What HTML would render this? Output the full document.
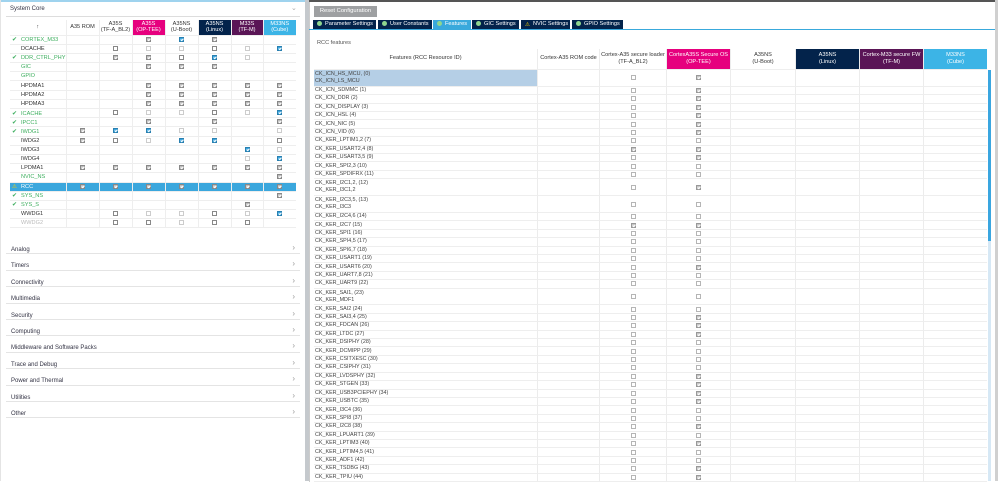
<!DOCTYPE html>
<html><head><meta charset="utf-8"><style>
*{box-sizing:border-box;margin:0;padding:0}
body{width:998px;height:481px;overflow:hidden;background:#fff;font-family:"Liberation Sans",sans-serif;position:relative;color:#333}
.abs{position:absolute}
table{border-collapse:collapse;table-layout:fixed;font-size:5.6px}
td{padding:0;text-align:center;vertical-align:middle;white-space:nowrap;overflow:hidden}
.lt td{height:9.2px;border-bottom:1px solid #eee;border-left:1px solid #eee}
.lt td.n{text-align:left;padding-left:2px;border-left:none}
.lt thead td{height:15px;line-height:6.5px;color:#333}
.gr{color:#3dae5e}
.ck{color:#3dae5e;display:inline-block;width:9px;font-size:6px}
.sp{display:inline-block;width:9px}
i{display:inline-block;width:5px;height:5px;border:1px solid #888;vertical-align:middle;position:relative}
i.g{background:#bcbcbc;border-color:#888}
i.b{background:#3aa6e0;border-color:#2a80b0}
i.l{border-color:#ccc}
i.g:after,i.b:after{content:"";position:absolute;left:1px;top:0px;width:1.2px;height:2.2px;border:solid #fff;border-width:0 1px 1px 0;transform:rotate(45deg)}
.sel td{background:#3ba7dd;color:#fff}
.cat{position:absolute;left:6px;width:294px;height:16.4px;border-bottom:1.5px solid #e4e4e4;font-size:6px;color:#334;padding-left:5px;padding-top:7px;line-height:10px}
.cat:after{content:"›";position:absolute;right:5px;top:5px;color:#999;font-size:8px;line-height:10px}
.rt{display:block;width:673px}
.rt thead,.rt tbody{display:block}
.rt tr{display:flex;height:8.42px;overflow:hidden}
.rt tr.d{height:16.84px}
.rt thead tr{height:21px}
.rt td{display:flex;align-items:center;justify-content:center;flex:none;height:100%;border-bottom:1px solid #eeeeee;border-left:1px solid #ececec;line-height:7px}
.rt td:nth-child(1){width:223px}.rt td:nth-child(2){width:62px}.rt td:nth-child(3){width:67px}.rt td:nth-child(4){width:64px}.rt td:nth-child(5){width:65px}.rt td:nth-child(6){width:64px}.rt td:nth-child(7){width:64px}.rt td:nth-child(8){width:64px}
.rt td.n{justify-content:flex-start;text-align:left;padding-left:1px;border-left:none;color:#444;font-size:5.4px}
.rt thead td{font-size:5.6px;line-height:7.5px;color:#333;white-space:normal;text-align:center}
.rt i{width:5px;height:5px;border-color:#b5b5b5}
.rt i.g{background:#c6c6c6;border-color:#999}
.tab{position:absolute;top:20px;height:9px;background:#03234b;color:#fff;font-size:5.6px;line-height:9px;padding-left:4px}
.tab b{display:inline-block;width:5px;height:5px;border-radius:50%;background:#8fd68f;margin-right:3px;vertical-align:-0.5px}
</style></head><body>
<!-- left panel -->
<div class="abs" style="left:0;top:0;width:305px;height:1.5px;background:#9fd3ee"></div>
<div class="abs" style="left:305px;top:0;width:4px;height:481px;background:#c5c9cd"></div>
<div class="abs" style="left:10px;top:6px;font-size:6px;color:#334">System Core</div>
<div class="abs" style="left:291px;top:4px;font-size:7px;color:#aaa">⌄</div>
<div class="abs" style="left:6px;top:15.5px;width:294px;height:1px;background:#ddd"></div>
<table class="lt abs" style="left:10px;top:20px;width:286px">
<colgroup><col style="width:56px"><col style="width:33px"><col style="width:33px"><col style="width:33px"><col style="width:33px"><col style="width:33px"><col style="width:32px"><col style="width:33px"></colgroup>
<thead><tr><td style="border-left:none">↑</td><td>A35 ROM</td><td>A35S<br>(TF-A_BL2)</td><td style="background:#e6007e;color:#fff">A35S<br>(OP-TEE)</td><td>A35NS<br>(U-Boot)</td><td style="background:#03234b;color:#fff">A35NS<br>(Linux)</td><td style="background:#5a1556;color:#fff">M33S<br>(TF-M)</td><td style="background:#3cb4e6;color:#fff">M33NS<br>(Cube)</td></tr></thead>
<tbody>
<tr><td class="n gr"><span class="ck">✔</span>CORTEX_M33</td><td></td><td></td><td><i class="g"></i></td><td><i class="b"></i></td><td><i class="g"></i></td><td></td><td></td></tr>
<tr><td class="n"><span class="sp"></span>DCACHE</td><td></td><td><i></i></td><td><i class="l"></i></td><td><i class="l"></i></td><td><i></i></td><td><i class="l"></i></td><td><i class="b"></i></td></tr>
<tr><td class="n gr"><span class="ck">✔</span>DDR_CTRL_PHY</td><td></td><td><i class="g"></i></td><td><i class="g"></i></td><td><i></i></td><td><i class="b"></i></td><td><i class="l"></i></td><td></td></tr>
<tr><td class="n gr"><span class="sp"></span>GIC</td><td></td><td></td><td><i class="g"></i></td><td><i class="g"></i></td><td><i class="g"></i></td><td></td><td></td></tr>
<tr><td class="n gr"><span class="sp"></span>GPIO</td><td></td><td></td><td></td><td></td><td></td><td></td><td></td></tr>
<tr><td class="n"><span class="sp"></span>HPDMA1</td><td></td><td></td><td><i class="g"></i></td><td><i class="g"></i></td><td><i class="g"></i></td><td><i class="g"></i></td><td><i class="g"></i></td></tr>
<tr><td class="n"><span class="sp"></span>HPDMA2</td><td></td><td></td><td><i class="g"></i></td><td><i class="g"></i></td><td><i class="g"></i></td><td><i class="g"></i></td><td><i class="g"></i></td></tr>
<tr><td class="n"><span class="sp"></span>HPDMA3</td><td></td><td></td><td><i class="g"></i></td><td><i class="g"></i></td><td><i class="g"></i></td><td><i class="g"></i></td><td><i class="g"></i></td></tr>
<tr><td class="n gr"><span class="ck">✔</span>ICACHE</td><td></td><td><i></i></td><td><i class="l"></i></td><td><i class="l"></i></td><td><i></i></td><td><i class="l"></i></td><td><i class="b"></i></td></tr>
<tr><td class="n gr"><span class="ck">✔</span>IPCC1</td><td></td><td></td><td><i class="g"></i></td><td></td><td><i class="g"></i></td><td></td><td><i class="g"></i></td></tr>
<tr><td class="n gr"><span class="ck">✔</span>IWDG1</td><td><i class="g"></i></td><td><i class="b"></i></td><td><i class="b"></i></td><td><i class="l"></i></td><td><i class="l"></i></td><td></td><td><i class="l"></i></td></tr>
<tr><td class="n"><span class="sp"></span>IWDG2</td><td><i class="g"></i></td><td><i></i></td><td><i class="l"></i></td><td><i class="b"></i></td><td><i class="b"></i></td><td></td><td><i></i></td></tr>
<tr><td class="n"><span class="sp"></span>IWDG3</td><td></td><td></td><td></td><td></td><td></td><td><i class="b"></i></td><td><i class="l"></i></td></tr>
<tr><td class="n"><span class="sp"></span>IWDG4</td><td></td><td></td><td></td><td></td><td></td><td><i class="l"></i></td><td><i class="b"></i></td></tr>
<tr><td class="n"><span class="sp"></span>LPDMA1</td><td><i class="g"></i></td><td><i class="g"></i></td><td><i class="g"></i></td><td><i class="g"></i></td><td><i class="g"></i></td><td><i class="g"></i></td><td><i class="g"></i></td></tr>
<tr><td class="n gr"><span class="sp"></span>NVIC_NS</td><td></td><td></td><td></td><td></td><td></td><td></td><td><i class="g"></i></td></tr>
<tr class="sel"><td class="n"><span class="sp" style="color:#f5d000">⚠</span>RCC</td><td><i class="g"></i></td><td><i class="g"></i></td><td><i class="g"></i></td><td><i class="g"></i></td><td><i class="g"></i></td><td><i class="g"></i></td><td><i class="g"></i></td></tr>
<tr><td class="n gr"><span class="ck">✔</span>SYS_NS</td><td></td><td></td><td></td><td></td><td></td><td></td><td><i class="g"></i></td></tr>
<tr><td class="n gr"><span class="ck">✔</span>SYS_S</td><td></td><td></td><td></td><td></td><td></td><td><i class="g"></i></td><td></td></tr>
<tr><td class="n"><span class="sp"></span>WWDG1</td><td></td><td><i></i></td><td><i class="l"></i></td><td><i class="l"></i></td><td><i></i></td><td><i class="l"></i></td><td><i class="b"></i></td></tr>
<tr><td class="n" style="color:#bbb"><span class="sp"></span>WWDG2</td><td></td><td><i></i></td><td><i></i></td><td><i class="l"></i></td><td><i></i></td><td><i></i></td><td></td></tr>
</tbody></table>
<div class="cat" style="top:238px">Analog</div>
<div class="cat" style="top:254.4px">Timers</div>
<div class="cat" style="top:270.8px">Connectivity</div>
<div class="cat" style="top:287.2px">Multimedia</div>
<div class="cat" style="top:303.6px">Security</div>
<div class="cat" style="top:320px">Computing</div>
<div class="cat" style="top:336.4px">Middleware and Software Packs</div>
<div class="cat" style="top:352.8px">Trace and Debug</div>
<div class="cat" style="top:369.2px">Power and Thermal</div>
<div class="cat" style="top:385.6px">Utilities</div>
<div class="cat" style="top:402px">Other</div>
<div class="abs" style="left:0;top:0;width:1px;height:481px;background:#e4e4e4"></div>

<!-- right panel -->
<div class="abs" style="left:309px;top:0;width:689px;height:1.5px;background:#555"></div>
<div class="abs" style="left:309px;top:1.5px;width:1px;height:480px;background:#ccc"></div>
<div class="abs" style="left:314px;top:6px;width:63px;height:11px;background:#9ea0a2;color:#fff;font-size:5.8px;line-height:11px;text-align:center">Reset Configuration</div>
<div class="tab" style="left:313px;width:63px"><b></b>Parameter Settings</div>
<div class="tab" style="left:378px;width:54px"><b></b>User Constants</div>
<div class="tab" style="left:433px;width:38px;background:#39a9dc"><b></b>Features</div>
<div class="tab" style="left:472px;width:47px"><b></b>GIC Settings</div>
<div class="tab" style="left:521px;width:49px"><b style="background:none;border-radius:0;width:auto;color:#f5d000;font-weight:normal">⚠</b>NVIC Settings</div>
<div class="tab" style="left:572px;width:51px"><b></b>GPIO Settings</div>
<div class="abs" style="left:309px;top:29px;width:689px;height:1px;background:#39a9dc"></div>
<div class="abs" style="left:317px;top:40px;font-size:5.6px;color:#555">RCC features</div>
<table class="rt abs" style="left:314px;top:49px">
<thead><tr><td style="border-left:none">Features (RCC Resource ID)</td><td>Cortex-A35 ROM code</td><td>Cortex-A35 secure loader<br>(TF-A_BL2)</td><td style="background:#e6007e;color:#fff">CortexA35S Secure OS<br>(OP-TEE)</td><td>A35NS<br>(U-Boot)</td><td style="background:#03234b;color:#fff">A35NS<br>(Linux)</td><td style="background:#5a1556;color:#fff">Cortex-M33 secure FW<br>(TF-M)</td><td style="background:#3cb4e6;color:#fff">M33NS<br>(Cube)</td></tr></thead>
<tbody>
<tr class="d"><td class="n" style="background:#b5cfe6">CK_ICN_HS_MCU, (0)<br>CK_ICN_LS_MCU</td><td></td><td><i></i></td><td><i class="g"></i></td><td></td><td></td><td></td><td></td></tr>
<tr><td class="n">CK_ICN_SDMMC (1)</td><td></td><td><i></i></td><td><i class="g"></i></td><td></td><td></td><td></td><td></td></tr>
<tr><td class="n">CK_ICN_DDR (2)</td><td></td><td><i></i></td><td><i class="g"></i></td><td></td><td></td><td></td><td></td></tr>
<tr><td class="n">CK_ICN_DISPLAY (3)</td><td></td><td><i></i></td><td><i class="g"></i></td><td></td><td></td><td></td><td></td></tr>
<tr><td class="n">CK_ICN_HSL (4)</td><td></td><td><i></i></td><td><i class="g"></i></td><td></td><td></td><td></td><td></td></tr>
<tr><td class="n">CK_ICN_NIC (5)</td><td></td><td><i></i></td><td><i class="g"></i></td><td></td><td></td><td></td><td></td></tr>
<tr><td class="n">CK_ICN_VID (6)</td><td></td><td><i></i></td><td><i class="g"></i></td><td></td><td></td><td></td><td></td></tr>
<tr><td class="n">CK_KER_LPTIM1,2 (7)</td><td></td><td><i></i></td><td><i></i></td><td></td><td></td><td></td><td></td></tr>
<tr><td class="n">CK_KER_USART2,4 (8)</td><td></td><td><i class="g"></i></td><td><i class="g"></i></td><td></td><td></td><td></td><td></td></tr>
<tr><td class="n">CK_KER_USART3,5 (9)</td><td></td><td><i></i></td><td><i class="g"></i></td><td></td><td></td><td></td><td></td></tr>
<tr><td class="n">CK_KER_SPI2,3 (10)</td><td></td><td><i></i></td><td><i></i></td><td></td><td></td><td></td><td></td></tr>
<tr><td class="n">CK_KER_SPDIFRX (11)</td><td></td><td><i></i></td><td><i></i></td><td></td><td></td><td></td><td></td></tr>
<tr class="d"><td class="n">CK_KER_I2C1,2, (12)<br>CK_KER_I3C1,2</td><td></td><td><i></i></td><td><i class="g"></i></td><td></td><td></td><td></td><td></td></tr>
<tr class="d"><td class="n">CK_KER_I2C3,5, (13)<br>CK_KER_I3C3</td><td></td><td><i></i></td><td><i></i></td><td></td><td></td><td></td><td></td></tr>
<tr><td class="n">CK_KER_I2C4,6 (14)</td><td></td><td><i></i></td><td><i></i></td><td></td><td></td><td></td><td></td></tr>
<tr><td class="n">CK_KER_I2C7 (15)</td><td></td><td><i class="g"></i></td><td><i class="g"></i></td><td></td><td></td><td></td><td></td></tr>
<tr><td class="n">CK_KER_SPI1 (16)</td><td></td><td><i></i></td><td><i></i></td><td></td><td></td><td></td><td></td></tr>
<tr><td class="n">CK_KER_SPI4,5 (17)</td><td></td><td><i></i></td><td><i></i></td><td></td><td></td><td></td><td></td></tr>
<tr><td class="n">CK_KER_SPI6,7 (18)</td><td></td><td><i></i></td><td><i></i></td><td></td><td></td><td></td><td></td></tr>
<tr><td class="n">CK_KER_USART1 (19)</td><td></td><td><i></i></td><td><i></i></td><td></td><td></td><td></td><td></td></tr>
<tr><td class="n">CK_KER_USART6 (20)</td><td></td><td><i></i></td><td><i class="g"></i></td><td></td><td></td><td></td><td></td></tr>
<tr><td class="n">CK_KER_UART7,8 (21)</td><td></td><td><i></i></td><td><i></i></td><td></td><td></td><td></td><td></td></tr>
<tr><td class="n">CK_KER_UART9 (22)</td><td></td><td><i></i></td><td><i></i></td><td></td><td></td><td></td><td></td></tr>
<tr class="d"><td class="n">CK_KER_SAI1, (23)<br>CK_KER_MDF1</td><td></td><td><i></i></td><td><i></i></td><td></td><td></td><td></td><td></td></tr>
<tr><td class="n">CK_KER_SAI2 (24)</td><td></td><td><i></i></td><td><i></i></td><td></td><td></td><td></td><td></td></tr>
<tr><td class="n">CK_KER_SAI3,4 (25)</td><td></td><td><i></i></td><td><i class="g"></i></td><td></td><td></td><td></td><td></td></tr>
<tr><td class="n">CK_KER_FDCAN (26)</td><td></td><td><i></i></td><td><i class="g"></i></td><td></td><td></td><td></td><td></td></tr>
<tr><td class="n">CK_KER_LTDC (27)</td><td></td><td><i></i></td><td><i class="g"></i></td><td></td><td></td><td></td><td></td></tr>
<tr><td class="n">CK_KER_DSIPHY (28)</td><td></td><td><i></i></td><td><i></i></td><td></td><td></td><td></td><td></td></tr>
<tr><td class="n">CK_KER_DCMIPP (29)</td><td></td><td><i></i></td><td><i></i></td><td></td><td></td><td></td><td></td></tr>
<tr><td class="n">CK_KER_CSITXESC (30)</td><td></td><td><i></i></td><td><i></i></td><td></td><td></td><td></td><td></td></tr>
<tr><td class="n">CK_KER_CSIPHY (31)</td><td></td><td><i></i></td><td><i></i></td><td></td><td></td><td></td><td></td></tr>
<tr><td class="n">CK_KER_LVDSPHY (32)</td><td></td><td><i></i></td><td><i class="g"></i></td><td></td><td></td><td></td><td></td></tr>
<tr><td class="n">CK_KER_STGEN (33)</td><td></td><td><i></i></td><td><i class="g"></i></td><td></td><td></td><td></td><td></td></tr>
<tr><td class="n">CK_KER_USB3PCIEPHY (34)</td><td></td><td><i></i></td><td><i class="g"></i></td><td></td><td></td><td></td><td></td></tr>
<tr><td class="n">CK_KER_USBTC (35)</td><td></td><td><i></i></td><td><i class="g"></i></td><td></td><td></td><td></td><td></td></tr>
<tr><td class="n">CK_KER_I3C4 (36)</td><td></td><td><i></i></td><td><i></i></td><td></td><td></td><td></td><td></td></tr>
<tr><td class="n">CK_KER_SPI8 (37)</td><td></td><td><i></i></td><td><i></i></td><td></td><td></td><td></td><td></td></tr>
<tr><td class="n">CK_KER_I2C8 (38)</td><td></td><td><i></i></td><td><i class="g"></i></td><td></td><td></td><td></td><td></td></tr>
<tr><td class="n">CK_KER_LPUART1 (39)</td><td></td><td><i></i></td><td><i></i></td><td></td><td></td><td></td><td></td></tr>
<tr><td class="n">CK_KER_LPTIM3 (40)</td><td></td><td><i></i></td><td><i class="g"></i></td><td></td><td></td><td></td><td></td></tr>
<tr><td class="n">CK_KER_LPTIM4,5 (41)</td><td></td><td><i></i></td><td><i></i></td><td></td><td></td><td></td><td></td></tr>
<tr><td class="n">CK_KER_ADF1 (42)</td><td></td><td><i></i></td><td><i></i></td><td></td><td></td><td></td><td></td></tr>
<tr><td class="n">CK_KER_TSDBG (43)</td><td></td><td><i></i></td><td><i class="g"></i></td><td></td><td></td><td></td><td></td></tr>
<tr><td class="n">CK_KER_TPIU (44)</td><td></td><td><i></i></td><td><i class="g"></i></td><td></td><td></td><td></td><td></td></tr>
</tbody></table>
<div class="abs" style="left:988px;top:70px;width:3px;height:411px;background:#d6e8f5"></div>
<div class="abs" style="left:988px;top:70px;width:3px;height:171px;background:#3aa6e0"></div>
<div class="abs" style="left:995px;top:0;width:3px;height:481px;background:#d0d0d0"></div>
</body></html>
